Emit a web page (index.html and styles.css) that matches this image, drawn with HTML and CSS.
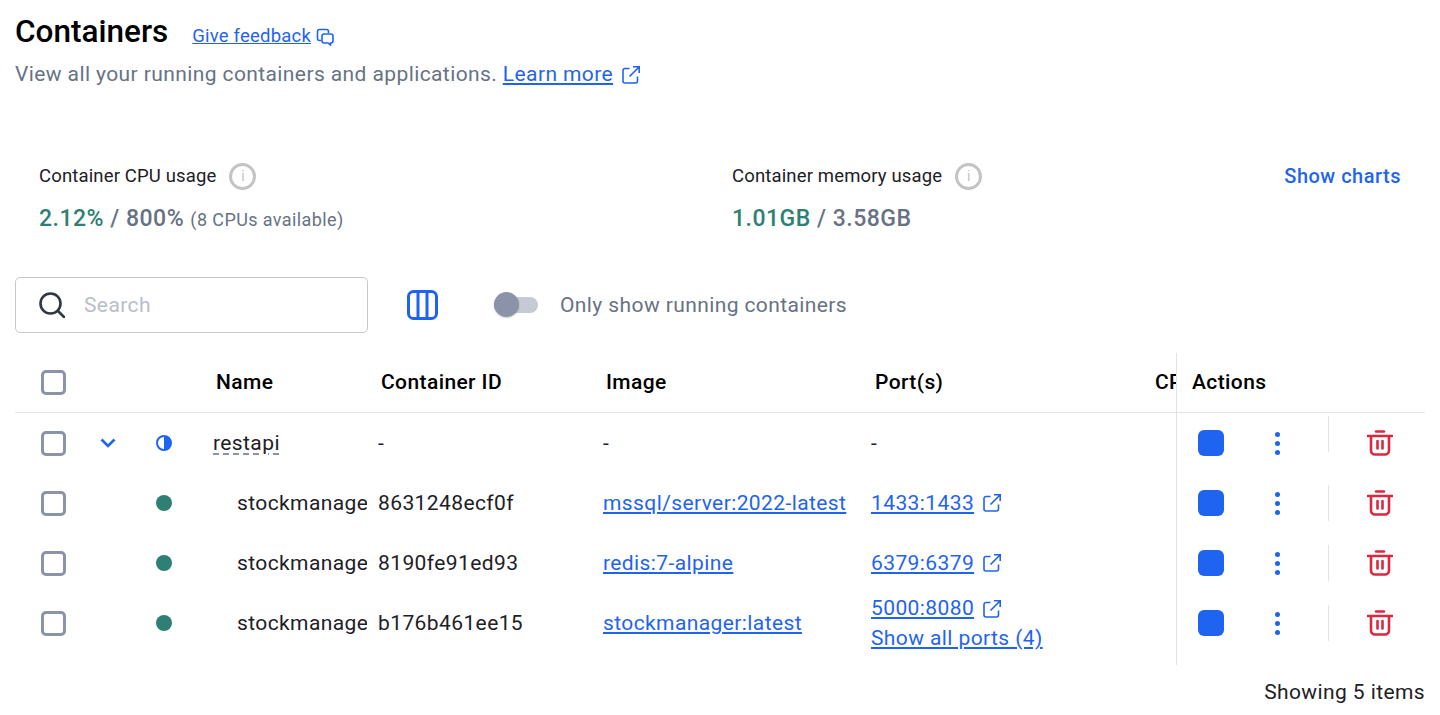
FILE: index.html

```html
<!DOCTYPE html>
<html lang="en">
<head>
<meta charset="UTF-8">
<title>Containers</title>
<link rel="stylesheet" href="styles.css">
</head>
<body>
<svg class="defs" width="0" height="0">
  <symbol id="ext" viewBox="0 0 20 20">
    <path d="M8.500 3.500H4a2 2 0 0 0-2 2V16a2 2 0 0 0 2 2h10.500a2 2 0 0 0 2-2v-4.500" fill="none" stroke="currentColor" stroke-width="1.600"/>
    <path d="M8.500 11.500 18 2M12 1.800h6.200V8" fill="none" stroke="currentColor" stroke-width="1.600"/>
  </symbol>
  <symbol id="trash" viewBox="0 0 26 26">
    <path d="M9 1.500h8M1 6h24" fill="none" stroke="currentColor" stroke-width="2.600" stroke-linecap="round"/>
    <path d="M4 6.500v14a4 4 0 0 0 4 4h10a4 4 0 0 0 4-4v-14" fill="none" stroke="currentColor" stroke-width="2.600"/>
    <path d="M10.500 11v7.500M15.500 11v7.500" fill="none" stroke="currentColor" stroke-width="2.600" stroke-linecap="round"/>
  </symbol>
</svg>

<div class="page">
  <div class="title-row">
    <h1>Containers</h1>
    <a class="feedback" href="#">Give feedback</a>
    <svg class="feedback-icon" viewBox="0 0 18 18" width="18" height="18">
      <path d="M5 12.500H3.500a2 2 0 0 1-2-2V3.500a2 2 0 0 1 2-2h7a2 2 0 0 1 2 2V5" fill="none" stroke="currentColor" stroke-width="1.600"/>
      <path d="M8 6h7a2 2 0 0 1 2 2v5a2 2 0 0 1-2 2h-.5v2l-2.500-2H8a2 2 0 0 1-2-2V8a2 2 0 0 1 2-2z" fill="none" stroke="currentColor" stroke-width="1.600"/>
    </svg>
  </div>
  <p class="sub">View all your running containers and applications. <a href="#">Learn more</a><svg class="ext sub-ext"><use href="#ext"/></svg></p>

  <div class="stats">
    <div class="stat stat-cpu">
      <div class="stat-label">Container CPU usage <span class="info">i</span></div>
      <div class="stat-value"><span class="green">2.12%</span> / 800% <small>(8 CPUs available)</small></div>
    </div>
    <div class="stat stat-mem">
      <div class="stat-label">Container memory usage <span class="info">i</span></div>
      <div class="stat-value"><span class="green">1.01GB</span> / 3.58GB</div>
    </div>
    <a class="charts" href="#">Show charts</a>
  </div>

  <div class="toolbar">
    <div class="search">
      <svg viewBox="0 0 26 26" width="26" height="26">
        <circle cx="11.500" cy="11.500" r="10" fill="none" stroke="#2f3744" stroke-width="2.600"/>
        <path d="M19 19l6 6" stroke="#2f3744" stroke-width="2.600" stroke-linecap="round"/>
      </svg>
      <span>Search</span>
    </div>
    <svg class="columns" viewBox="0 0 31 30" width="31" height="30">
      <rect x="1.500" y="1.500" width="28" height="27" rx="5" fill="none" stroke="currentColor" stroke-width="3"/>
      <path d="M11 2v26M20 2v26" stroke="currentColor" stroke-width="3"/>
    </svg>
    <div class="toggle"><span class="knob"></span></div>
    <span class="toggle-label">Only show running containers</span>
  </div>

  <div class="table">
    <div class="row head">
      <div class="cell cell-check"><span class="check"></span></div>
      <div class="cell"></div>
      <div class="cell"></div>
      <div class="cell name">Name</div>
      <div class="cell">Container ID</div>
      <div class="cell">Image</div>
      <div class="cell head-ports">Port(s)</div>
      <div class="cell clip">CPU (%)</div>
      <div class="cell actions">Actions</div>
    </div>

    <div class="row group">
      <div class="cell cell-check"><span class="check"></span></div>
      <div class="cell center">
        <svg class="chevron" viewBox="0 0 16 10" width="16" height="10"><path d="M1.500 1.500 8 8l6.500-6.500" fill="none" stroke="currentColor" stroke-width="2.600"/></svg>
      </div>
      <div class="cell center">
        <svg viewBox="0 0 16 16" width="16" height="16"><circle cx="8" cy="8" r="7" fill="#fff" stroke="#1f64f0" stroke-width="2"/><path d="M8 1a7 7 0 0 1 0 14z" fill="#1f64f0"/></svg>
      </div>
      <div class="cell name"><span class="dashed">restapi</span></div>
      <div class="cell">-</div>
      <div class="cell">-</div>
      <div class="cell">-</div>
      <div class="cell"></div>
      <div class="cell actions">
        <span class="stop"></span><span class="kebab"><i></i><i></i><i></i></span><span class="sep sep-first"></span><svg class="trash"><use href="#trash"/></svg>
      </div>
    </div>

    <div class="row">
      <div class="cell cell-check"><span class="check"></span></div>
      <div class="cell"></div>
      <div class="cell center"><span class="dot"></span></div>
      <div class="cell name child">stockmanager-sqlserver-1</div>
      <div class="cell">8631248ecf0f</div>
      <div class="cell"><a href="#">mssql/server:2022-latest</a></div>
      <div class="cell"><a href="#">1433:1433</a><svg class="ext"><use href="#ext"/></svg></div>
      <div class="cell"></div>
      <div class="cell actions">
        <span class="stop"></span><span class="kebab"><i></i><i></i><i></i></span><span class="sep"></span><svg class="trash"><use href="#trash"/></svg>
      </div>
    </div>

    <div class="row">
      <div class="cell cell-check"><span class="check"></span></div>
      <div class="cell"></div>
      <div class="cell center"><span class="dot"></span></div>
      <div class="cell name child">stockmanager-redis-1</div>
      <div class="cell">8190fe91ed93</div>
      <div class="cell"><a href="#">redis:7-alpine</a></div>
      <div class="cell"><a href="#">6379:6379</a><svg class="ext"><use href="#ext"/></svg></div>
      <div class="cell"></div>
      <div class="cell actions">
        <span class="stop"></span><span class="kebab"><i></i><i></i><i></i></span><span class="sep"></span><svg class="trash"><use href="#trash"/></svg>
      </div>
    </div>

    <div class="row">
      <div class="cell cell-check"><span class="check"></span></div>
      <div class="cell"></div>
      <div class="cell center"><span class="dot"></span></div>
      <div class="cell name child">stockmanager-api-1</div>
      <div class="cell">b176b461ee15</div>
      <div class="cell"><a href="#">stockmanager:latest</a></div>
      <div class="cell ports">
        <div><a href="#">5000:8080</a><svg class="ext"><use href="#ext"/></svg></div>
        <a href="#">Show all ports (4)</a>
      </div>
      <div class="cell"></div>
      <div class="cell actions">
        <span class="stop"></span><span class="kebab"><i></i><i></i><i></i></span><span class="sep"></span><svg class="trash"><use href="#trash"/></svg>
      </div>
    </div>

    <div class="row tail">
      <div class="actions-tail"></div>
    </div>
  </div>

  <div class="count">Showing 5 items</div>
</div>
</body>
</html>
```

FILE: styles.css

```css
html, body {
  margin: 0;
  background: #fff;
}
body {
  font-family: Roboto, "Liberation Sans", sans-serif;
  font-size: 21px;
  letter-spacing: 0.4px;
  color: #1d2026;
  overflow: hidden;
}
a {
  color: #1f64f0;
}
.defs {
  position: absolute;
}
.page {
  padding: 0 15px;
  height: 715px;
  box-sizing: border-box;
}

.title-row {
  display: flex;
  align-items: center;
  height: 62px;
}
h1 {
  margin: 0;
  font-size: 31.500px;
  font-weight: 500;
  letter-spacing: 0;
  color: #000;
}
.feedback {
  margin-left: 24px;
  margin-top: 9px;
  font-size: 18.500px;
  letter-spacing: 0.2px;
}
.feedback-icon {
  margin-left: 5px;
  margin-top: 11px;
  color: #1f64f0;
}
.sub {
  margin: 0;
  line-height: 24px;
  color: #677285;
}
.ext {
  flex: none;
  width: 20px;
  height: 20px;
  margin-left: 8px;
  vertical-align: -4px;
  color: #1f64f0;
}

.stats {
  display: flex;
  margin-top: 75px;
  height: 71px;
}
.stat {
  padding-left: 24px;
}
.stat-cpu {
  width: 693px;
}
.stat-mem {
  flex: 1;
  padding-left: 0;
}
.stat-label {
  display: flex;
  align-items: center;
  font-size: 18.500px;
  letter-spacing: 0.15px;
  height: 30px;
}
.info {
  display: inline-flex;
  align-items: center;
  justify-content: center;
  box-sizing: border-box;
  width: 27px;
  height: 27px;
  margin-left: 13px;
  border: 3px solid #c4c4c4;
  border-radius: 50%;
  font-size: 14px;
  color: #c4c4c4;
}
.stat-value {
  margin-top: 14px;
  font-size: 23px;
  font-weight: 500;
  letter-spacing: 0.5px;
  color: #677285;
}
.stat-value small {
  font-size: 18px;
  font-weight: 400;
  letter-spacing: 0.4px;
}
.green {
  color: #2e7f74;
}
.charts {
  margin-right: 24px;
  margin-top: 3px;
  font-size: 20px;
  font-weight: 500;
  letter-spacing: 0.5px;
  text-decoration: none;
}

.toolbar {
  display: flex;
  align-items: center;
  margin-top: 45px;
  height: 56px;
}
.search {
  display: flex;
  align-items: center;
  box-sizing: border-box;
  width: 353px;
  height: 56px;
  padding-left: 23px;
  border: 1px solid #c4c8d1;
  border-radius: 5px;
  color: #b9bec8;
}
.search span {
  margin-left: 19px;
}
.columns {
  margin-left: 39px;
  color: #1f64f0;
}
.toggle {
  position: relative;
  width: 44px;
  height: 16px;
  margin-left: 56px;
  border-radius: 8px;
  background: #c5cad5;
}
.knob {
  position: absolute;
  left: 0;
  top: -5px;
  width: 25px;
  height: 25px;
  border-radius: 50%;
  background: #8b93a8;
  box-shadow: 0 1px 2px rgba(0,0,0,0.2);
}
.toggle-label {
  margin-left: 22px;
  color: #677285;
}

.table {
  margin-top: 20px;
}
.row {
  display: grid;
  grid-template-columns: 70px 46px 66px 181px 225px 268px 283px 22px 249px;
  height: 60px;
  align-items: stretch;
}
.head {
  height: 59px;
  border-bottom: 1px solid #e1e2e6;
  font-weight: 500;
  color: #000;
}
.cell {
  display: flex;
  align-items: center;
  white-space: nowrap;
  overflow: hidden;
  min-width: 0;
}
.head .cell {
  padding-left: 3px;
  padding-bottom: 2px;
}
.head .cell-check {
  padding-left: 26px;
  padding-bottom: 0;
}
.head .head-ports {
  padding-left: 4px;
}
.head .clip {
  padding-left: 1px;
}
.center {
  justify-content: center;
}
.cell-check {
  padding-left: 26px;
}
.check {
  display: block;
  box-sizing: border-box;
  width: 25px;
  height: 25px;
  border: 3px solid #8b93a8;
  border-radius: 5px;
}
.chevron {
  color: #1f64f0;
}
.name {
  padding-left: 16px;
  margin-right: 11px;
}
.head .name {
  padding-left: 19px;
  margin-right: 0;
}
.child {
  padding-left: 40px;
}
.dashed {
  text-decoration: underline dashed #8b93a8 2px;
  text-underline-offset: 3px;
}
.dot {
  display: block;
  width: 16px;
  height: 16px;
  border-radius: 50%;
  background: #2e7f74;
}
.ports {
  display: block;
  line-height: 30px;
}
.actions {
  border-left: 1px solid #e1e2e6;
  padding-left: 21px;
}
.head .actions {
  padding-left: 15px;
}
.stop {
  flex: none;
  width: 26px;
  height: 26px;
  border-radius: 6px;
  background: #1f64f0;
}
.kebab {
  flex: none;
  display: flex;
  flex-direction: column;
  align-items: center;
  gap: 4px;
  width: 26px;
  margin-left: 40px;
}
.kebab i {
  display: block;
  width: 5px;
  height: 5px;
  border-radius: 50%;
  background: #1f64f0;
}
.sep {
  flex: none;
  width: 1px;
  height: 36px;
  margin-left: 38px;
  background: #e1e2e6;
}
.sep-first {
  margin-bottom: 18px;
}
.trash {
  flex: none;
  width: 26px;
  height: 26px;
  margin-left: 38px;
  color: #d9283f;
}
.tail {
  height: 12px;
  grid-template-columns: 1161px 249px;
}
.actions-tail {
  grid-column: 2;
  border-left: 1px solid #e1e2e6;
}
.count {
  margin-top: 15px;
  text-align: right;
  line-height: 24px;
}
```
